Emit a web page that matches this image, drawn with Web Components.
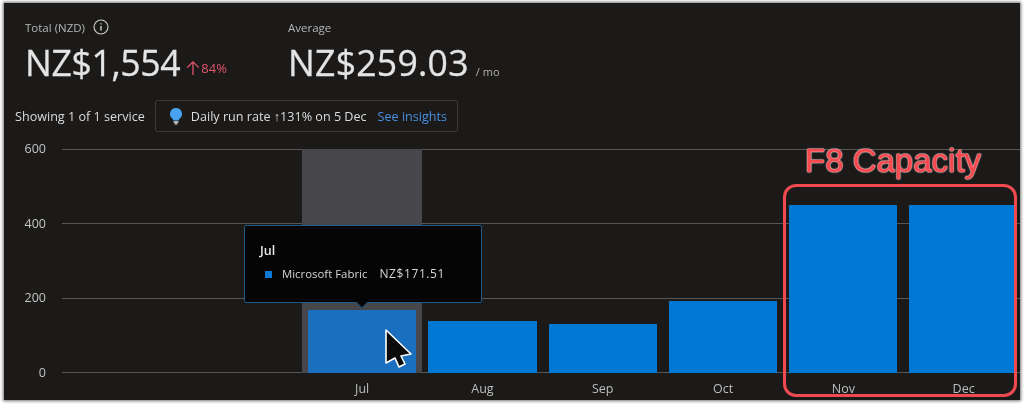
<!DOCTYPE html>
<html><head><meta charset="utf-8"><style>
html,body{margin:0;padding:0;background:#fff;width:1024px;height:404px;overflow:hidden}
body{font-family:"Open Sans","Liberation Sans",sans-serif}
</style></head><body>
<cost-panel>
  <cost-summary slot="top"></cost-summary>
  <insight-row slot="top"></insight-row>
  <cost-chart></cost-chart>
</cost-panel>
<script>
function def(name,html){customElements.define(name,class extends HTMLElement{constructor(){super();this.attachShadow({mode:'open'}).innerHTML=html}})}
def('cost-panel',`<style>
:host{display:flex;flex-direction:column;box-sizing:border-box;width:1016px;height:397px;margin:3px 0 0 4px;background:#1b1a19;overflow:hidden;position:relative;box-shadow:0 0 3px 1px rgba(0,0,0,.55);filter:blur(.35px)}
</style><slot name="top"></slot><slot></slot>`);
def('cost-stat',`<style>
:host{display:flex;flex-direction:column;color:#e6e6e6}
.l{display:flex;align-items:center;gap:8px;height:18px;font-size:11.5px;color:#b5b5b5;margin-top:-1px}
.v{display:flex;align-items:baseline;height:46px;margin-top:3px}
::slotted([slot=value]){font-size:35.6px;line-height:46px;color:#e4e4e4;-webkit-text-stroke:.3px #e4e4e4;letter-spacing:var(--ls,0)}
</style><div class="l"><slot name="label"></slot></div><div class="v"><slot name="value"></slot><slot name="extra"></slot></div>`);
def('cost-summary',`<style>
:host{display:flex;padding:16px 0 0 21px;height:74px;box-sizing:content-box}
.a{width:263px;flex:none;--ls:-.35px}
.c{--ls:.25px}
.d{color:#e0556a;font-size:13px;margin-left:6px;display:inline-flex;align-items:center;gap:1px}
.m{color:#b0b0b0;font-size:11px;margin-left:7px}
svg{display:block}
</style>
<cost-stat class="a"><span slot="label">Total (NZD)</span>
<svg slot="label" width="16" height="16" viewBox="0 0 16 16" fill="none" stroke="#d0d0d0"><circle cx="8" cy="8" r="7" stroke-width="1.1"/><path d="M8 7v4.4M8 4.2v1.4" stroke-width="1.4"/></svg>
<span slot="value">NZ$1,554</span>
<span slot="extra" class="d"><svg width="14" height="16" viewBox="0 0 14 16" fill="none" stroke="#e0556a" stroke-width="1.3"><path d="M7 15V2M1.2 7.6 7 1.8l5.8 5.8"/></svg>84%</span></cost-stat>
<cost-stat class="c"><span slot="label">Average</span><span slot="value">NZ$259.03</span><span slot="extra" class="m">/ mo</span></cost-stat>`);
def('insight-row',`<style>
:host{display:flex;align-items:center;gap:10px;padding-left:11px;height:32px;margin-top:7px;font-size:12.6px;color:#dcdcdc}
.b{display:flex;align-items:center;height:32px;box-sizing:border-box;border:1px solid #3b3a39;border-radius:2px;padding:0 10px 0 12px;width:303px;white-space:nowrap}
svg{margin-right:7px;flex:none}
a{color:#4a8ee0;margin-left:11px}
</style><span>Showing 1 of 1 service</span>
<div class="b"><svg width="16" height="18" viewBox="0 0 16 18"><path d="M8 1a6 6 0 0 0-3.6 10.800c.6.5.9 1 .9 1.700h5.400c0-.7.3-1.200.9-1.700A6 6 0 0 0 8 1z" fill="#4aa3f0"/><path d="M5.600 14.300h4.800v1.400H5.600zM6.600 16.300h2.800V17.500H6.600z" fill="#dfe6ee"/></svg><span>Daily run rate ↑131% on 5 Dec</span><a>See insights</a></div>`);
def('cost-bar',`<style>
:host{display:flex;flex-direction:column;justify-content:flex-end;height:100%;position:relative;box-sizing:border-box;padding:0 6px}
:host([hover]){background:#47474b}
:host(.end){padding-right:10px}
.f{background:var(--c,#0078d4);height:var(--h)}
</style><div class="f"></div>`);
def('cost-chart',`<style>
:host{display:block;position:relative;flex:1;color:#bdbdbd;font-size:12px}
.grid{display:grid;grid-template-columns:58px 1fr;position:absolute;left:0;right:0;top:17px;height:224px}
.y{position:relative;display:flex;flex-direction:column;justify-content:space-between;align-items:flex-end;margin:-8px 0;padding-right:16px;font-size:12.5px;line-height:16px;color:#c4c4c4}
.lines{display:flex;flex-direction:column;justify-content:space-between}
.lines i{display:block;height:1px;background:#565656}
.bars{position:absolute;left:298px;top:17px;height:224px;display:grid;grid-template-columns:repeat(6,120.3px);}
.x{position:absolute;left:298px;top:249px;display:grid;grid-template-columns:repeat(6,120.3px);text-align:center;font-size:12.5px;line-height:16px;color:#bdbdbd}
.tip{position:absolute;left:240px;top:93px;width:238px;height:78px;box-sizing:border-box;background:#050506;border:1px solid #1d5a85;border-radius:2px;padding:16px 15px;color:#d6d6d6}
.tip b{display:block;font-size:12.5px;font-weight:600;line-height:17px;color:#e8e8e8}
.row{display:flex;align-items:center;font-size:11.4px;margin-top:7px;line-height:16px;white-space:nowrap}
.row i{width:7px;height:7px;background:#0a7ad6;margin:0 10px 0 5px}
.row span{margin-left:12px;font-size:12px;letter-spacing:.6px}
.tip:after{content:"";position:absolute;left:112px;bottom:-6px;width:9px;height:9px;background:#050506;border-right:1px solid #1d5a85;border-bottom:1px solid #1d5a85;transform:rotate(45deg) scale(.75)}
.note{position:absolute;left:779px;top:52px;width:234px;height:213px;box-sizing:border-box;border:3px solid #f04a50;border-radius:13px}
.title{position:absolute;left:801px;top:12px;font:400 33px/34px "Liberation Sans",sans-serif;color:#f5484f;-webkit-text-stroke:.6px #f5484f;text-shadow:0 0 1px #fff,0 0 1px #fff,0 0 1px #fff,0 0 2px #fff;white-space:nowrap}
.cur{position:absolute;left:380px;top:196px}
</style>
<div class="grid"><div class="y"><span>600</span><span>400</span><span>200</span><span>0</span></div><div class="lines"><i></i><i></i><i></i><i></i></div></div>
<div class="bars">
<cost-bar hover style="--h:63px;--c:#1a6fbe"></cost-bar>
<cost-bar style="--h:52px"></cost-bar>
<cost-bar style="--h:49px"></cost-bar>
<cost-bar style="--h:72px"></cost-bar>
<cost-bar style="--h:168.500px"></cost-bar>
<cost-bar class="end" style="--h:168.500px"></cost-bar>
</div>
<div class="x"><span>Jul</span><span>Aug</span><span>Sep</span><span>Oct</span><span>Nov</span><span>Dec</span></div>
<div class="tip"><b>Jul</b><div class="row"><i></i>Microsoft Fabric<span>NZ$171.51</span></div></div>
<div class="note"></div>
<div class="title">F8 Capacity</div>
<svg class="cur" width="30" height="42" viewBox="0 0 30 42"><path d="M2 2V35L11 30 15 39 21 36 17 28 27 26z" fill="#0b0b0b" stroke="#fff" stroke-width="1.600" stroke-linejoin="round"/></svg>`);
</script>
</body></html>
